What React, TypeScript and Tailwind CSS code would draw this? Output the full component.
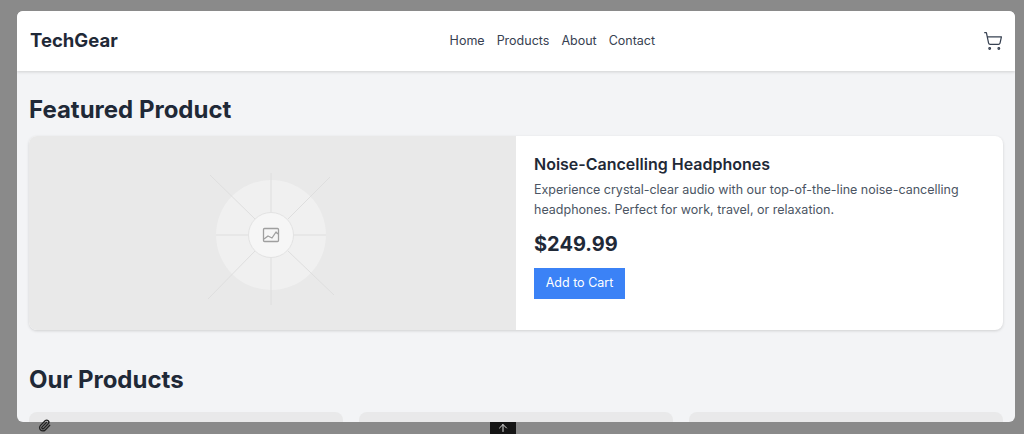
import React from "react";
import { ShoppingCart, Paperclip, ArrowUp } from "lucide-react";

const font = { fontFamily: "Inter, 'Liberation Sans', sans-serif" };

function Placeholder() {
  return (
    <svg width="170" height="160" viewBox="0 0 170 160" fill="none">
      <circle cx="83" cy="82" r="55" fill="#f0f0f0" />
      <g stroke="#dedede" strokeWidth="1">
        <path d="M83 20V60M83 104V152" />
        <path d="M28 82H61M105 82H138" />
        <path d="M22 22L67 66M100 98L146 142" />
        <path d="M142 24L100 66M67 98L20 146" />
      </g>
      <circle cx="83" cy="82" r="22.5" fill="#f6f6f6" stroke="#e2e2e2" />
      <g stroke="#9f9f9f" strokeWidth="1.3" strokeLinejoin="round">
        <rect x="75.500" y="75.500" width="15" height="13" rx="1" />
        <path d="M76 86L80 83L84 85L88 79L90 81" />
      </g>
    </svg>
  );
}

function Tile() {
  return <div className="h-[10px] flex-1 rounded-t-lg bg-[#e9e9ea]" />;
}

export default function App() {
  return (
    <div className="flex h-[434px] w-[1024px] flex-col overflow-hidden bg-[#8a8a8a]" style={font}>
      <div className="ml-[17px] mt-[11px] flex h-[411px] w-[998px] shrink-0 flex-col overflow-hidden rounded-md bg-[#f3f4f6]">
        <header className="flex h-[60px] shrink-0 items-center justify-between bg-white px-[13px] shadow-[0_1px_3px_rgba(0,0,0,0.15)]">
          <span className="text-[18.500px] font-bold text-[#1f2937]">TechGear</span>
          <nav className="ml-[4px] flex gap-[12px] text-[12.500px] text-[#374151]">
            <span>Home</span>
            <span>Products</span>
            <span>About</span>
            <span>Contact</span>
          </nav>
          <ShoppingCart size={20} strokeWidth={1.5} className="-mr-[1px] text-[#374151]" />
        </header>
        <main className="flex flex-1 flex-col px-[12px]">
          <h2 className="mt-[24px] text-[24px] leading-[30px] font-bold text-[#1f2937]">Featured Product</h2>
          <section className="mt-[11px] flex h-[194px] shrink-0 overflow-hidden rounded-lg bg-white shadow-[0_1px_3px_rgba(0,0,0,0.15)]">
            <div className="flex w-[487px] shrink-0 items-center justify-center bg-[#e9e9e9]">
              <Placeholder />
            </div>
            <div className="flex flex-col items-start px-[18px] pt-[18px]">
              <h3 className="text-[16px] leading-[20px] font-semibold text-[#1f2937]">Noise-Cancelling Headphones</h3>
              <p className="mt-[6px] text-[12.500px] leading-[20px] text-[#4b5563]">
                Experience crystal-clear audio with our top-of-the-line noise-cancelling
                <br />
                headphones. Perfect for work, travel, or relaxation.
              </p>
              <div className="mt-[11px] text-[20px] leading-[26px] font-bold text-[#1f2937]">$249.99</div>
              <button className="mt-[11px] h-[31px] w-[91px] bg-[#3b82f6] text-[12.500px] text-white">Add to Cart</button>
            </div>
          </section>
          <h2 className="mt-[35px] text-[24px] leading-[30px] font-bold text-[#1f2937]">Our Products</h2>
          <div className="mt-auto flex gap-[16px]">
            <Tile />
            <Tile />
            <Tile />
          </div>
        </main>
      </div>
      <div className="flex h-[12px] items-start pl-[38px]">
        <Paperclip size={13} strokeWidth={2.500} className="mt-[-3px] text-[#222]" />
        <div className="ml-[439px] flex h-[13px] w-[26px] items-start justify-center overflow-hidden bg-[#151515]">
          <ArrowUp size={12} className="text-[#ddd]" />
        </div>
      </div>
    </div>
  );
}
